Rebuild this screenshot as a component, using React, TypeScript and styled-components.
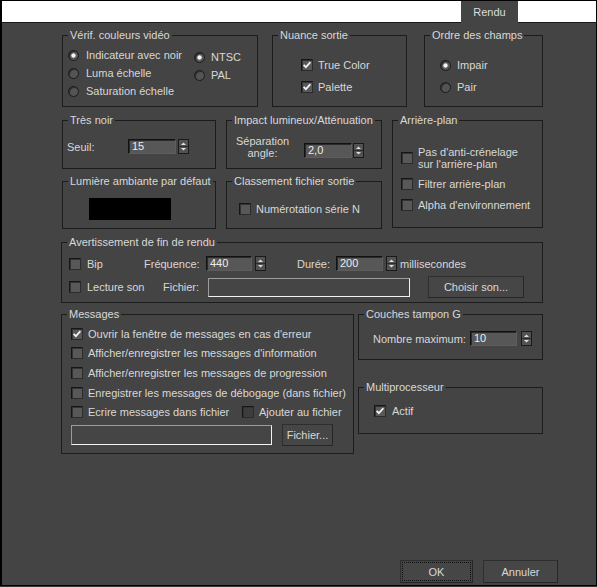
import React from 'react'
import styled, { createGlobalStyle } from 'styled-components'

const GlobalStyle = createGlobalStyle`
  html, body {
    margin: 0;
    padding: 0;
    background: #3a3a3a;
  }
  body {
    font-family: "Liberation Sans", Arial, sans-serif;
    font-size: 11px;
  }
  *, *::before, *::after {
    box-sizing: border-box;
  }
`

const Window = styled.div`
  width: 597px;
  height: 586px;
  border: 1px solid #000;
  border-left-width: 2px;
  background: #444;
  color: #d8d8d8;
  display: flex;
  flex-direction: column;
`

const TabStrip = styled.div`
  display: flex;
  height: 22px;
  flex: none;
`

const StripFill = styled.div<{ $w?: number }>`
  flex: ${p => (p.$w ? `0 0 ${p.$w}px` : '1')};
  background: #fff;
  border-bottom: 1px solid #1a1a1a;
`

const Tab = styled.div`
  flex: 0 0 57px;
  background: #444;
  text-align: center;
  line-height: 22px;
  color: #dcdcdc;
`

const Body = styled.div`
  flex: 1;
  display: flex;
  flex-direction: column;
  padding: 6px 0 0 59px;
`

const Row = styled.div<{ $mt?: number; $ml?: number }>`
  display: flex;
  align-items: flex-start;
  margin-top: ${p => p.$mt ?? 0}px;
  margin-left: ${p => p.$ml ?? 0}px;
`

const MiddleGrid = styled.div`
  display: grid;
  grid-template-columns: 154px 156px 151px;
  grid-template-rows: 55px 54px;
  column-gap: 10px;
  row-gap: 6px;
  margin: 7px 0 0 1px;
`

const Group = styled.fieldset<{ $w: number; $h: number; $ml?: number; $mt?: number; $side?: boolean }>`
  width: ${p => p.$w}px;
  height: ${p => p.$h}px;
  min-width: 0;
  margin: ${p => p.$mt ?? 0}px 0 0 ${p => p.$ml ?? 0}px;
  padding: 0;
  border: 1px solid #1c1c1c;
  ${p => (p.$side ? 'grid-column: 3; grid-row: 1 / span 2; align-self: start;' : '')}

  & > legend {
    margin-left: 5px;
    padding: 0 2px;
    line-height: 13px;
    color: #d8d8d8;
  }
`

const Inner = styled.div<{ $pt: number; $pl: number }>`
  padding: ${p => p.$pt}px 0 0 ${p => p.$pl}px;
`

const Stack = styled.div<{ $gap?: number; $pt?: number; $ml?: number }>`
  display: flex;
  flex-direction: column;
  gap: ${p => p.$gap ?? 0}px;
  padding-top: ${p => p.$pt ?? 0}px;
  margin-left: ${p => p.$ml ?? 0}px;
`

const Option = styled.label<{ $h: number; $gap?: number; $w?: number }>`
  display: flex;
  align-items: center;
  gap: ${p => p.$gap ?? 5}px;
  height: ${p => p.$h}px;
  ${p => (p.$w ? `width: ${p.$w}px; flex: none;` : '')}
  white-space: nowrap;
`

const RadioCols = styled.div`
  display: grid;
  grid-template-columns: 126px auto;
`

const RadioDot = styled.span<{ $on?: boolean }>`
  flex: none;
  width: 11px;
  height: 11px;
  border-radius: 50%;
  border: 1px solid #1a1a1a;
  box-shadow: inset 1px 1px 0 #2e2e2e;
  background: ${p =>
    p.$on
      ? 'radial-gradient(circle, #f4f4f4 0 1.8px, #6a6a6a 2.4px, #555 3.5px)'
      : '#545454'};
`

const CheckBox = styled.span<{ $dim?: boolean }>`
  flex: none;
  width: 12px;
  height: 12px;
  display: inline-flex;
  align-items: center;
  justify-content: center;
  border: 1px solid #161616;
  border-right-color: #2c2c2c;
  border-bottom-color: #2c2c2c;
  box-shadow: inset 1px 1px 0 #333;
  background: ${p => (p.$dim ? '#3d3d3d' : '#585858')};
`

const Check = ({ on, dim }: { on?: boolean; dim?: boolean }) => (
  <CheckBox $dim={dim}>
    {on && (
      <svg width="10" height="10" viewBox="0 0 10 10">
        <path d="M1.6 4.8 L3.9 7.2 L8.4 2.2" fill="none" stroke="#f0f0f0" strokeWidth="1.8" />
      </svg>
    )}
  </CheckBox>
)

const Radio = ({ on }: { on?: boolean }) => <RadioDot $on={on} />

const Field = styled.div<{ $ai?: string; $h?: number; $mt?: number }>`
  display: flex;
  align-items: ${p => p.$ai ?? 'center'};
  ${p => (p.$h ? `height: ${p.$h}px;` : '')}
  margin-top: ${p => p.$mt ?? 0}px;
  white-space: nowrap;
`

const Label = styled.span<{ $w?: number; $ml?: number }>`
  ${p => (p.$w ? `width: ${p.$w}px; flex: none;` : '')}
  margin-left: ${p => p.$ml ?? 0}px;
`

const LabelStack = styled.span`
  width: 53px;
  flex: none;
  text-align: center;
  line-height: 12px;
`

const TwoLines = styled.span`
  line-height: 12px;
`

const NumInput = styled.span<{ $w: number; $mt?: number; $ml?: number }>`
  width: ${p => p.$w}px;
  height: 15px;
  flex: none;
  margin-top: ${p => p.$mt ?? 0}px;
  margin-left: ${p => p.$ml ?? 0}px;
  padding-left: 3px;
  line-height: 13px;
  background: #575757;
  border: 1px solid #121212;
  border-right-color: #5e5e5e;
  border-bottom-color: #5e5e5e;
  box-shadow: inset 1px 1px 0 #2a2a2a;
  color: #ececec;
`

const SpinBox = styled.span<{ $ml?: number; $mt?: number }>`
  width: 11px;
  height: 15px;
  flex: none;
  margin-left: ${p => p.$ml ?? 2}px;
  margin-top: ${p => p.$mt ?? 0}px;
  display: flex;
  border: 1px solid #1a1a1a;
  background: #525252;
`

const Spinner = ({ ml, mt }: { ml?: number; mt?: number }) => (
  <SpinBox $ml={ml} $mt={mt}>
    <svg width="9" height="13" viewBox="0 0 9 13">
      <polygon points="2,5 4.5,2.5 7,5" fill="#dedede" />
      <line x1="0" y1="6.5" x2="9" y2="6.5" stroke="#2c2c2c" strokeWidth="1" />
      <polygon points="2,8 7,8 4.5,10.5" fill="#dedede" />
    </svg>
  </SpinBox>
)

const Swatch = styled.div`
  width: 82px;
  height: 22px;
  background: #000;
`

const FileField = styled.div<{ $w: number; $h: number }>`
  width: ${p => p.$w}px;
  height: ${p => p.$h}px;
  flex: none;
  background: #454545;
  border: 1px solid #9c9c9c;
  border-right-color: #f2f2f2;
  border-bottom-color: #f2f2f2;
`

const Btn = styled.button<{ $w: number; $h: number; $ml?: number; $focus?: boolean }>`
  width: ${p => p.$w}px;
  height: ${p => p.$h}px;
  flex: none;
  margin-left: ${p => p.$ml ?? 0}px;
  padding: 0;
  font: inherit;
  color: #d8d8d8;
  background: #464646;
  border: 1px solid #262626;
  border-top-color: #2e2e2e;
  border-left-color: #2e2e2e;
  outline: ${p => (p.$focus ? '1px dotted #0e0e0e' : 'none')};
  outline-offset: -3px;
`

const MsgRow = styled.label<{ $w?: number }>`
  display: flex;
  align-items: center;
  gap: 5px;
  height: 19.6px;
  ${p => (p.$w ? `width: ${p.$w}px; flex: none;` : '')}
  white-space: nowrap;
`

const MsgLine = styled.div`
  display: flex;
  height: 19.6px;
`

const Footer = styled.div`
  margin-top: auto;
  display: flex;
  justify-content: flex-end;
  gap: 10px;
  padding: 0 38px 2px 0;
`

export default function App() {
  return (
    <>
      <GlobalStyle />
      <Window>
        <TabStrip>
          <StripFill $w={459} />
          <Tab>Rendu</Tab>
          <StripFill />
        </TabStrip>

        <Body>
          <Row $ml={1}>
            <Group $w={196} $h={78}>
              <legend>Vérif. couleurs vidéo</legend>
              <Inner $pt={4} $pl={5}>
                <RadioCols>
                  <Stack>
                    <Option $h={18} $gap={7}><Radio on />Indicateur avec noir</Option>
                    <Option $h={18} $gap={7}><Radio />Luma échelle</Option>
                    <Option $h={18} $gap={7}><Radio />Saturation échelle</Option>
                  </Stack>
                  <Stack $pt={2}>
                    <Option $h={18} $gap={6}><Radio on />NTSC</Option>
                    <Option $h={18} $gap={6}><Radio />PAL</Option>
                  </Stack>
                </RadioCols>
              </Inner>
            </Group>

            <Group $w={135} $h={78} $ml={14}>
              <legend>Nuance sortie</legend>
              <Inner $pt={12} $pl={28}>
                <Option $h={22}><Check on />True Color</Option>
                <Option $h={22}><Check on />Palette</Option>
              </Inner>
            </Group>

            <Group $w={119} $h={78} $ml={17}>
              <legend>Ordre des champs</legend>
              <Inner $pt={12} $pl={15}>
                <Option $h={22} $gap={6}><Radio on />Impair</Option>
                <Option $h={22} $gap={6}><Radio />Pair</Option>
              </Inner>
            </Group>
          </Row>

          <MiddleGrid>
            <Group $w={154} $h={55}>
              <legend>Très noir</legend>
              <Inner $pt={12} $pl={4}>
                <Field>
                  <Label $w={61}>Seuil:</Label>
                  <NumInput $w={48}>15</NumInput>
                  <Spinner ml={2} />
                </Field>
              </Inner>
            </Group>

            <Group $w={156} $h={55}>
              <legend>Impact lumineux/Atténuation</legend>
              <Inner $pt={8} $pl={9}>
                <Field $ai="flex-start">
                  <LabelStack>Séparation<br />angle:</LabelStack>
                  <NumInput $w={48} $mt={8} $ml={15}>2,0</NumInput>
                  <Spinner ml={1} mt={8} />
                </Field>
              </Inner>
            </Group>

            <Group $w={151} $h={114} $side>
              <legend>Arrière-plan</legend>
              <Inner $pt={19} $pl={8}>
                <Stack $gap={7}>
                  <Option $h={24}><Check /><TwoLines>Pas d'anti-crénelage<br />sur l'arrière-plan</TwoLines></Option>
                  <Option $h={14}><Check />Filtrer arrière-plan</Option>
                  <Option $h={14}><Check />Alpha d'environnement</Option>
                </Stack>
              </Inner>
            </Group>

            <Group $w={154} $h={54}>
              <legend>Lumière ambiante par défaut</legend>
              <Inner $pt={10} $pl={26}>
                <Swatch />
              </Inner>
            </Group>

            <Group $w={156} $h={54}>
              <legend>Classement fichier sortie</legend>
              <Inner $pt={14} $pl={12}>
                <Option $h={13}><Check />Numérotation série N</Option>
              </Inner>
            </Group>
          </MiddleGrid>

          <Group $w={482} $h={67} $mt={7}>
            <legend>Avertissement de fin de rendu</legend>
            <Inner $pt={7} $pl={7}>
              <Field $h={15}>
                <Option $h={15} $gap={6} $w={75}><Check />Bip</Option>
                <Label $w={62}>Fréquence:</Label>
                <NumInput $w={46}>440</NumInput>
                <Spinner ml={3} />
                <Label $w={39} $ml={31}>Durée:</Label>
                <NumInput $w={47}>200</NumInput>
                <Spinner ml={3} />
                <Label $ml={3}>millisecondes</Label>
              </Field>
              <Field $h={22} $mt={5}>
                <Option $h={22} $gap={6} $w={94}><Check />Lecture son</Option>
                <Label $w={45}>Fichier:</Label>
                <FileField $w={202} $h={19} />
                <Btn $w={96} $h={22} $ml={18}>Choisir son...</Btn>
              </Field>
            </Inner>
          </Group>

          <Row $mt={5}>
            <Group $w={293} $h={146}>
              <legend>Messages</legend>
              <Inner $pt={3} $pl={9}>
                <MsgRow><Check on />Ouvrir la fenêtre de messages en cas d'erreur</MsgRow>
                <MsgRow><Check />Afficher/enregistrer les messages d'information</MsgRow>
                <MsgRow><Check />Afficher/enregistrer les messages de progression</MsgRow>
                <MsgRow><Check />Enregistrer les messages de débogage (dans fichier)</MsgRow>
                <MsgLine>
                  <MsgRow $w={171}><Check />Ecrire messages dans fichier</MsgRow>
                  <MsgRow><Check dim />Ajouter au fichier</MsgRow>
                </MsgLine>
                <Field $h={22} $mt={2}>
                  <FileField $w={201} $h={20} />
                  <Btn $w={51} $h={22} $ml={10}>Fichier...</Btn>
                </Field>
              </Inner>
            </Group>

            <Stack $ml={4}>
              <Group $w={185} $h={52}>
                <legend>Couches tampon G</legend>
                <Inner $pt={10} $pl={14}>
                  <Field>
                    <Label $w={97}>Nombre maximum:</Label>
                    <NumInput $w={47}>10</NumInput>
                    <Spinner ml={4} />
                  </Field>
                </Inner>
              </Group>
              <Group $w={185} $h={53} $mt={21}>
                <legend>Multiprocesseur</legend>
                <Inner $pt={11} $pl={15}>
                  <Option $h={12} $gap={6}><Check on />Actif</Option>
                </Inner>
              </Group>
            </Stack>
          </Row>

          <Footer>
            <Btn $w={73} $h={23} $focus>OK</Btn>
            <Btn $w={75} $h={23}>Annuler</Btn>
          </Footer>
        </Body>
      </Window>
    </>
  )
}
